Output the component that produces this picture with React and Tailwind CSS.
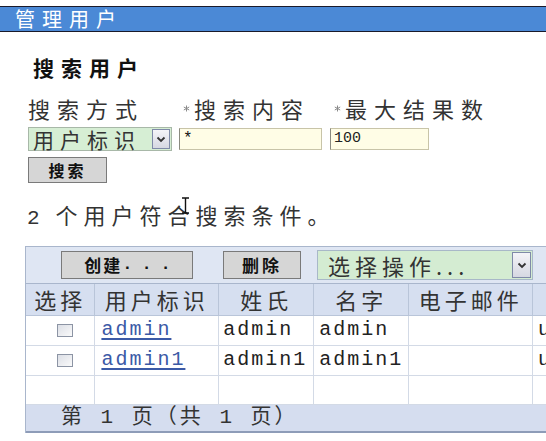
import React from "react";

const cjk = { fontFamily: '"Noto Sans CJK SC", "Noto Sans CJK TC", sans-serif' };
const mono = { fontFamily: '"Liberation Mono", "Noto Sans CJK SC", monospace' };

function Arrow({ cls }) {
  return (
    <div className={"flex items-center justify-center border border-[#7f8aa8] bg-gradient-to-b from-[#f4f4f8] to-[#d6d8e2] " + cls}>
      <svg width="10" height="7" viewBox="0 0 10 7">
        <path d="M1.5 1.5 L5 5 L8.5 1.5" fill="none" stroke="#333" strokeWidth="1.8" />
      </svg>
    </div>
  );
}

function Star() {
  return (
    <svg className="mr-[4px]" width="7" height="7" viewBox="0 0 7 7">
      <path d="M3.5 0.5 V6.5 M0.8 2 L6.2 5 M0.8 5 L6.2 2" stroke="#8a8a8a" strokeWidth="1" fill="none" />
    </svg>
  );
}

function Checkbox() {
  return <div className="mx-auto h-[13px] w-[16px] border border-[#8c94a4] bg-gradient-to-br from-[#dcdfe6] to-[#fafafa]" />;
}

export default function App() {
  const rows = [
    { id: "admin", last: "admin", first: "admin" },
    { id: "admin1", last: "admin1", first: "admin1" },
  ];
  return (
    <div className="relative h-[441px] w-[546px] overflow-hidden bg-white text-[#222]">
      <div className="h-[6px]" />
      <div className="flex h-[26px] items-center border-y border-[#1a1a2a] bg-[#4b89d6] pl-[15px] text-[20px] leading-none tracking-[7px] text-white" style={cjk}>
        管理用户
      </div>

      <div className="pl-[33px] pt-[24px] text-[21px] font-bold leading-[22px] tracking-[7px] text-[#111]" style={cjk}>
        搜索用户
      </div>

      <div className="ml-[28px] mt-[18px] grid grid-cols-[151px_151px_auto] text-[22px] leading-[24px] text-[#333]" style={cjk}>
        <div className="tracking-[7px]">搜索方式</div>
        <div className="flex items-center pl-[4px] tracking-[7px]">
          <Star />搜索内容
        </div>
        <div className="flex items-center pl-[4px] tracking-[7px]">
          <Star />最大结果数
        </div>
      </div>

      <div className="ml-[28px] mt-[7px] grid grid-cols-[151px_151px_auto] items-center">
        <div className="flex h-[24px] w-[144px] items-center border border-[#a8b8a8] bg-[#d6eed4] pl-[4px]">
          <span className="flex-1 text-[21px] leading-[22px] tracking-[6px] text-[#333]" style={cjk}>用户标识</span>
          <Arrow cls="mr-[1px] h-[20px] w-[18px]" />
        </div>
        <div className="flex h-[22px] w-[143px] items-center border border-[#c8c4a8] border-l-[#8a8a80] bg-[#fffde6] pl-[3px] text-[16px] text-[#111]" style={mono}>
          *
        </div>
        <div className="flex h-[22px] w-[99px] items-center border border-[#c8c4a8] border-l-[#8a8a80] bg-[#fffde6] pl-[3px] text-[15px] text-[#222]" style={mono}>
          100
        </div>
      </div>

      <div className="ml-[28px] mt-[6px] flex h-[26px] w-[79px] items-center justify-center border border-[#7a7a7a] bg-[#d6d6d6] text-[16px] font-bold tracking-[3px] text-[#111]" style={cjk}>
        搜索
      </div>

      <div className="ml-[27px] mt-[18px] flex h-[26px] items-baseline text-[#333]">
        <span className="mr-[16px] text-[21px] leading-[26px]" style={mono}>2</span>
        <span className="text-[22px] leading-[26px] tracking-[6px]" style={cjk}>个用户符合搜索条件。</span>
      </div>

      <svg className="absolute left-[181px] top-[197px]" width="9" height="17" viewBox="0 0 9 17">
        <path d="M1 1 H8 M4.5 1 V16 M1 16 H8" stroke="#111" strokeWidth="1.4" fill="none" />
      </svg>

      <div className="ml-[25px] mt-[19px] w-[640px] border-l border-t border-[#a9b6cc]">
        <div className="flex h-[37px] items-center border-b border-[#a9b6cc] bg-[#dfe6f3] pl-[35px]">
          <div className="flex h-[28px] w-[132px] items-center justify-center border border-[#7a7a7a] bg-[#d6d6d6] pl-[10px] text-[17px] font-bold text-[#111]">
            <span className="tracking-[2px]" style={cjk}>创建</span>
            <span className="tracking-[9px]" style={mono}>...</span>
          </div>
          <div className="ml-[30px] flex h-[28px] w-[78px] items-center justify-center border border-[#7a7a7a] bg-[#d6d6d6] text-[17px] font-bold tracking-[3px] text-[#111]" style={cjk}>
            删除
          </div>
          <div className="ml-[16px] flex h-[30px] w-[216px] items-center border border-[#a8b8c8] bg-[#d4ecd2] pl-[10px]">
            <span className="flex-1 text-[22px] leading-none tracking-[5px] text-[#333]" style={cjk}>选择操作...</span>
            <Arrow cls="mr-[1px] h-[26px] w-[19px]" />
          </div>
        </div>
        <table className="border-collapse text-[20px]" style={{ tableLayout: "fixed" }}>
          <colgroup>
            <col className="w-[69px]" />
            <col className="w-[124px]" />
            <col className="w-[95px]" />
            <col className="w-[95px]" />
            <col className="w-[124px]" />
            <col className="w-[132px]" />
          </colgroup>
          <thead>
            <tr className="h-[31px] bg-[#d6dff0] text-[22px] text-[#333]" style={cjk}>
              {["选择", "用户标识", "姓氏", "名字", "电子邮件", ""].map((h, i) => (
                <th key={i} className="border-b border-r border-[#b9c5d9] p-0 text-center font-normal leading-none tracking-[4px]">
                  {h}
                </th>
              ))}
            </tr>
          </thead>
          <tbody style={mono}>
            {rows.map((r) => (
              <tr key={r.id} className="h-[30px]">
                <td className="border-b border-r border-[#d3dae6] p-0 pl-[10px]"><Checkbox /></td>
                <td className="border-b border-r border-[#d3dae6] pl-[6px] leading-none">
                  <span className="tracking-[2px] text-[#3b5aa6] underline underline-offset-[3px]">{r.id}</span>
                </td>
                <td className="border-b border-r border-[#d3dae6] pl-[4px] leading-none tracking-[2px]">{r.last}</td>
                <td className="border-b border-r border-[#d3dae6] pl-[5px] leading-none tracking-[2px]">{r.first}</td>
                <td className="border-b border-r border-[#d3dae6]" />
                <td className="border-b border-r border-[#d3dae6] pl-[5px] leading-none">user</td>
              </tr>
            ))}
            <tr className="h-[29px]">
              {[0, 1, 2, 3, 4, 5].map((i) => (
                <td key={i} className="border-b border-r border-[#d3dae6]" />
              ))}
            </tr>
          </tbody>
        </table>
        <div className="flex h-[28px] items-center border-b-2 border-[#8e9cb8] bg-[#d5ddef] pl-[35px] text-[21px] leading-none tracking-[3px] text-[#333]" style={mono}>
          第 1 页（共 1 页）
        </div>
      </div>
    </div>
  );
}
